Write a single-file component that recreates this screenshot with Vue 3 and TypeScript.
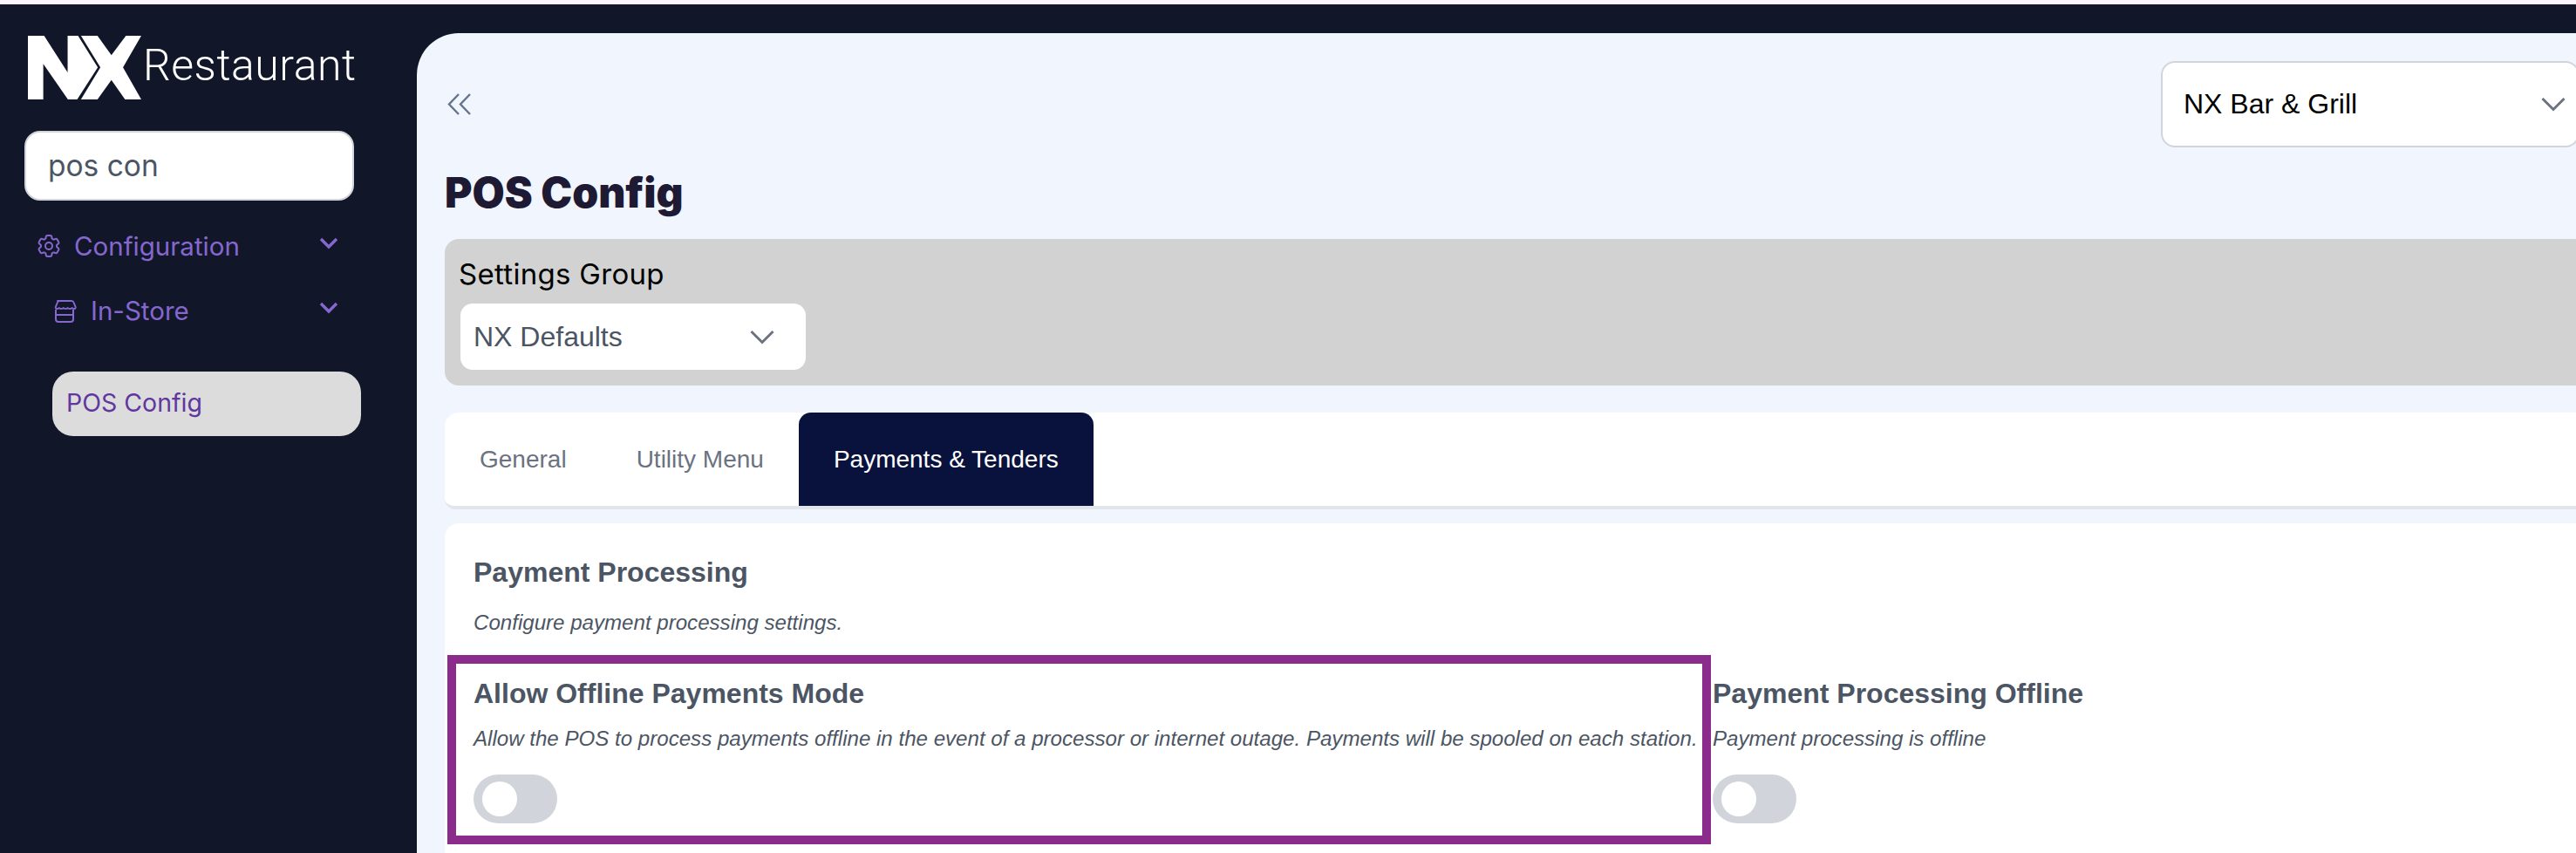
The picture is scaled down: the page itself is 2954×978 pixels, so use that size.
<template>
  <div class="app-shell">
    <aside class="sidebar">
      <div class="brand">
        <svg class="brand-mark" viewBox="22 18 391 219" aria-hidden="true">
          <polygon
            fill="#fff"
            points="22,18 78,18 159,144 159,18 195,18 263,127 192,237 160,237 75,115 75,237 22,237"
          />
          <polygon
            fill="#fff"
            points="205,18 262,18 310,85 360,18 413,18 350,127 413,237 357,237 310,170 262,237 205,237 272,127"
          />
        </svg>
        <span class="brand-name">Restaurant</span>
      </div>

      <input v-model="search" class="search" type="text" />

      <div class="nav-row nav-top">
        <svg class="nav-gear" viewBox="0 0 24 24" fill="none" stroke="currentColor" stroke-width="1.5">
          <path
            stroke-linecap="round"
            stroke-linejoin="round"
            d="M9.594 3.94c.09-.542.56-.94 1.11-.94h2.593c.55 0 1.02.398 1.11.94l.213 1.281c.063.374.313.686.645.87.074.04.147.083.22.127.325.196.72.257 1.075.124l1.217-.456a1.125 1.125 0 0 1 1.37.49l1.296 2.247a1.125 1.125 0 0 1-.26 1.431l-1.003.827c-.293.241-.438.613-.43.992a7.723 7.723 0 0 1 0 .255c-.008.378.137.75.43.991l1.004.827c.424.35.534.955.26 1.43l-1.298 2.247a1.125 1.125 0 0 1-1.369.491l-1.217-.456c-.355-.133-.75-.072-1.076.124a6.47 6.47 0 0 1-.22.128c-.331.183-.581.495-.644.869l-.213 1.281c-.09.543-.56.94-1.11.94h-2.594c-.55 0-1.019-.398-1.11-.94l-.213-1.281c-.062-.374-.312-.686-.644-.87a6.52 6.52 0 0 1-.22-.127c-.325-.196-.72-.257-1.076-.124l-1.217.456a1.125 1.125 0 0 1-1.369-.49l-1.297-2.247a1.125 1.125 0 0 1 .26-1.431l1.004-.827c.292-.24.437-.613.43-.991a6.932 6.932 0 0 1 0-.255c.007-.38-.138-.751-.43-.992l-1.004-.827a1.125 1.125 0 0 1-.26-1.43l1.297-2.247a1.125 1.125 0 0 1 1.37-.491l1.216.456c.356.133.751.072 1.076-.124.072-.044.146-.086.22-.128.332-.183.582-.495.644-.869l.214-1.28Z"
          />
          <circle cx="12" cy="12" r="3" />
        </svg>
        <span class="nav-label">Configuration</span>
        <svg class="nav-chevron" viewBox="0 0 22 14" fill="none" stroke="currentColor" stroke-width="3.4">
          <path d="M2 2l9 9 9-9" />
        </svg>
      </div>

      <div class="nav-row nav-sub">
        <svg class="nav-store" viewBox="0 0 28 27" fill="none" stroke="currentColor" stroke-width="2">
          <path
            stroke-linejoin="round"
            d="M6 2h16q2 0 2.600 2l2 5q.4 2-1.600 2q-1.800 0-2.400-1q-.6 1-2.400 1t-2.600-1q-.8 1-2.400 1t-2.400-1q-.8 1-2.600 1t-2.400-1q-.6 1-2.400 1q-2 0-1.600-2l2-5q.6-2 2.600-2z"
          />
          <path stroke-linejoin="round" d="M4 12v11q0 3 3 3h14q3 0 3-3V12M4 18h20" />
        </svg>
        <span class="nav-label">In-Store</span>
        <svg class="nav-chevron" viewBox="0 0 22 14" fill="none" stroke="currentColor" stroke-width="3.4">
          <path d="M2 2l9 9 9-9" />
        </svg>
      </div>

      <div class="nav-active">POS Config</div>
    </aside>

    <main class="main">
      <div class="topbar">
        <svg class="collapse" viewBox="0 0 27 25" fill="none" stroke="currentColor" stroke-width="2.4">
          <path d="M13 1L2 12.500l11 11.500M26 1L15 12.500l11 11.500" />
        </svg>
        <div class="store-select">
          <span>NX Bar &amp; Grill</span>
          <svg class="select-chevron" viewBox="0 0 28 17" fill="none" stroke="currentColor" stroke-width="3">
            <path d="M1.500 2L14 14.500 26.500 2" />
          </svg>
        </div>
      </div>

      <h1 class="page-title">POS Config</h1>

      <section class="settings-group">
        <div class="group-label">Settings Group</div>
        <div class="group-select">
          <span>NX Defaults</span>
          <svg class="select-chevron" viewBox="0 0 28 17" fill="none" stroke="currentColor" stroke-width="3">
            <path d="M1.500 2L14 14.500 26.500 2" />
          </svg>
        </div>
      </section>

      <nav class="tabs">
        <button
          v-for="tab in tabs"
          :key="tab"
          class="tab"
          :class="{ active: tab === activeTab }"
          @click="activeTab = tab"
        >
          {{ tab }}
        </button>
      </nav>

      <section class="panel">
        <h2 class="item-title section-title">Payment Processing</h2>
        <p class="item-desc section-desc">Configure payment processing settings.</p>

        <div class="items">
          <div v-for="item in items" :key="item.title" class="item" :class="{ flagged: item.flagged }">
            <h3 class="item-title">{{ item.title }}</h3>
            <p class="item-desc">{{ item.desc }}</p>
            <span class="toggle"><span class="knob"></span></span>
          </div>
        </div>
      </section>
    </main>
  </div>
</template>

<script setup lang="ts">
import { ref } from 'vue'

const search = ref('pos con')
const tabs = ['General', 'Utility Menu', 'Payments & Tenders']
const activeTab = ref('Payments & Tenders')

const items = [
  {
    title: 'Allow Offline Payments Mode',
    desc: 'Allow the POS to process payments offline in the event of a processor or internet outage. Payments will be spooled on each station.',
    flagged: true,
  },
  {
    title: 'Payment Processing Offline',
    desc: 'Payment processing is offline',
    flagged: false,
  },
]
</script>

<style>
html,
body {
  margin: 0;
  height: 100%;
  overflow: hidden;
  background: #fbf4fb;
}
</style>

<style scoped>
.app-shell {
  display: flex;
  width: 2954px;
  height: 973px;
  margin-top: 5px;
  overflow: hidden;
  background-color: #111729;
  font-family: 'Liberation Sans', Arial, sans-serif;
}

.sidebar {
  flex: 0 0 478px;
  box-sizing: border-box;
  padding: 36px 0 0 28px;
  font-family: Inter, 'Noto Sans', sans-serif;
  color: #8667cf;
}

.brand {
  display: flex;
  align-items: center;
  padding-left: 4px;
  height: 73px;
}

.brand-mark {
  width: 130px;
  height: 73px;
  flex: none;
}

.brand-name {
  margin: 0 0 6px 2px;
  font-family: Roboto, sans-serif;
  font-size: 50px;
  font-weight: 300;
  color: #fff;
  letter-spacing: 0.5px;
}

.search {
  display: block;
  box-sizing: border-box;
  width: 378px;
  height: 80px;
  margin-top: 36px;
  padding: 0 25px;
  border: 2px solid #d1d5db;
  border-radius: 18px;
  background: #fff;
  font-family: Inter, sans-serif;
  font-size: 33.500px;
  color: #4b5563;
  outline: none;
}

.nav-row {
  display: flex;
  align-items: center;
  height: 36px;
}

.nav-top {
  margin-top: 34px;
  padding-left: 12px;
  width: 348px;
}

.nav-sub {
  margin-top: 38px;
  padding-left: 32px;
  width: 328px;
}

.nav-gear {
  width: 32px;
  height: 32px;
  margin-right: 13px;
  flex: none;
}

.nav-store {
  width: 28px;
  height: 27px;
  margin-right: 16px;
  flex: none;
}

.nav-label {
  flex: 1;
  font-size: 29.500px;
  line-height: 36px;
}

.nav-chevron {
  width: 22px;
  height: 14px;
  margin-bottom: 6px;
  flex: none;
}

.nav-active {
  box-sizing: border-box;
  width: 354px;
  height: 74px;
  margin: 52px 0 0 32px;
  padding-left: 16px;
  border-radius: 24px;
  background: #dcdcdc;
  color: #5f379f;
  font-size: 28.500px;
  line-height: 72px;
}

.main {
  flex: 1;
  min-width: 0;
  box-sizing: border-box;
  margin-top: 33px;
  padding: 32px 0 0 32px;
  border-top-left-radius: 48px;
  background-color: #f1f5fe;
}

.topbar {
  display: flex;
  align-items: center;
  justify-content: space-between;
  height: 99px;
}

.collapse {
  width: 27px;
  height: 25px;
  margin-left: 3px;
  color: #64748b;
}

.store-select,
.group-select {
  display: flex;
  align-items: center;
  justify-content: space-between;
  box-sizing: border-box;
  background: #fff;
}

.store-select {
  width: 480px;
  height: 99px;
  padding: 0 14px 0 24px;
  margin-right: -4px;
  border: 2px solid #d1d5db;
  border-radius: 16px;
  font-size: 32px;
  color: #000;
}

.select-chevron {
  width: 28px;
  height: 17px;
  color: #6b7280;
  flex: none;
}

.page-title {
  margin: 20px 0 21px;
  font-family: Inter, sans-serif;
  font-size: 48px;
  font-weight: 900;
  line-height: 64px;
  color: #1e1a34;
}

.settings-group {
  box-sizing: border-box;
  height: 168px;
  padding: 18px 0 0 18px;
  border-radius: 16px 0 0 16px;
  background: #d2d2d2;
}

.group-label {
  margin-left: -2px;
  font-family: Inter, sans-serif;
  font-size: 33px;
  letter-spacing: 0.3px;
  line-height: 44px;
  color: #000;
}

.group-select {
  width: 396px;
  height: 76px;
  margin-top: 12px;
  padding: 0 36px 0 15px;
  border-radius: 14px;
  font-size: 32px;
  color: #4b5563;
}

.tabs {
  display: flex;
  box-sizing: border-box;
  height: 111px;
  margin-top: 31px;
  border-bottom: 4px solid #e2e5ea;
  border-top-left-radius: 16px;
  border-bottom-left-radius: 12px;
  background: #fff;
}

.tab {
  padding: 0 40px;
  border: 0;
  border-radius: 14px 14px 0 0;
  background: transparent;
  font-family: inherit;
  font-size: 28px;
  color: #6b7280;
  cursor: pointer;
}

.tab.active {
  background: #08123c;
  color: #fff;
}

.panel {
  height: 400px;
  margin-top: 16px;
  padding: 38px 0 0 33px;
  border-top-left-radius: 16px;
  background: #fff;
}

.item-title {
  margin: 0;
  font-size: 32px;
  font-weight: 700;
  line-height: 36px;
  color: #4b5563;
}

.item-desc {
  margin: 19px 0 0;
  font-size: 24.100px;
  font-style: italic;
  line-height: 30px;
  color: #4b5563;
  white-space: nowrap;
}

.section-desc {
  margin-top: 25px;
}

.items {
  display: grid;
  grid-template-columns: 1449px 1fr;
  margin: 22px 0 0 -30px;
}

.item {
  box-sizing: border-box;
  height: 217px;
  padding: 26px 0 0 2px;
}

.item.flagged {
  padding: 16px 0 0 20px;
  border: 10px solid #8b2b8b;
}

.toggle {
  display: flex;
  align-items: center;
  width: 96px;
  height: 56px;
  margin-top: 26px;
  padding-left: 10px;
  box-sizing: border-box;
  border-radius: 28px;
  background: #d1d5db;
}

.knob {
  width: 40px;
  height: 40px;
  border-radius: 50%;
  background: #fff;
}
</style>
